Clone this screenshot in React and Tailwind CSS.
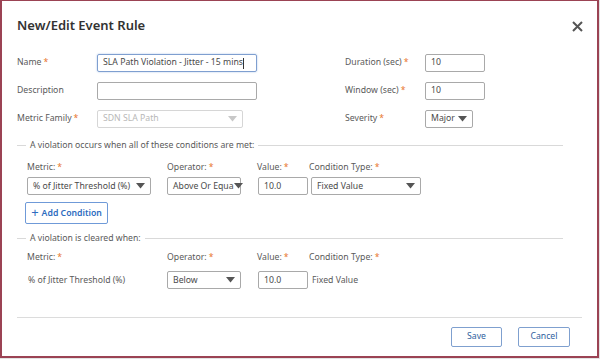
import React from "react";

const Star = () => <span className="text-[#e8772e] ml-[2px]">*</span>;

function Caret({ color = "#555" }) {
  return (
    <svg width="9" height="6" viewBox="0 0 9 6" className="shrink-0">
      <path d="M0 0 L9 0 L4.5 5.5 Z" fill={color} />
    </svg>
  );
}

function Select({ value, w, disabled, pr = "pr-[5px]" }) {
  return (
    <div
      className={`h-[18px] ${w} flex items-center justify-between pl-[5px] ${pr} border rounded-[2px] ${
        disabled ? "border-[#d6d6d6] text-[#b8b8b8]" : "border-[#a9a9a9] text-[#4a4a4a]"
      } whitespace-nowrap`}
    >
      <span>{value}</span>
      <Caret color={disabled ? "#c8c8c8" : "#555"} />
    </div>
  );
}

function Input({ value, w, focus }) {
  return (
    <div
      className={`h-[18px] ${w} flex items-center pl-[5px] border rounded-[2px] text-[#4a4a4a] ${
        focus ? "border-[#7f9fd0] border-[1.5px] shadow-[0_0_2px_#a9c2e6]" : "border-[#a9a9a9]"
      }`}
    >
      {value}
      {focus && <span className="w-px h-[11px] bg-[#333]" />}
    </div>
  );
}

function Legend({ text }) {
  return (
    <div className="flex items-center gap-[4px]">
      <div className="w-[9px] h-px bg-[#d9d9d9]" />
      <span className="text-[#5a5a5a] whitespace-nowrap">{text}</span>
      <div className="flex-1 h-px bg-[#d9d9d9]" />
    </div>
  );
}

function Heads({ mt }) {
  return (
    <div className={`pl-[25px] ${mt} grid grid-cols-[140px_90px_52px_120px] text-[#5a5a5a]`}>
      <span>Metric:<Star /></span>
      <span>Operator:<Star /></span>
      <span>Value:<Star /></span>
      <span>Condition Type:<Star /></span>
    </div>
  );
}

export default function App() {
  return (
    <div
      className="w-[600px] h-[359px] bg-[#e3e3e3] text-[8.7px]"
      style={{ fontFamily: '"Noto Sans", "Open Sans", sans-serif' }}
    >
      <div className="w-[599px] h-[358px] bg-white border-l-2 border-t border-r-2 border-b-2 border-[#9b4354] flex flex-col">
        {/* header */}
        <div className="flex items-center justify-between h-[48px] pl-[15px] pr-[14px] pt-[2px]">
          <h1 className="text-[13px] font-semibold text-[#333]">New/Edit Event Rule</h1>
          <svg width="11" height="11" viewBox="0 0 11 11">
            <path d="M1 1 L10 10 M10 1 L1 10" stroke="#555" strokeWidth="2" />
          </svg>
        </div>

        {/* top fields */}
        <div className="flex pl-[15px] text-[#5a5a5a]">
          <div className="w-[328px] flex flex-col">
            <div className="h-[28px] flex items-center">
              <span className="w-[80px]">Name<Star /></span>
              <Input value="SLA Path Violation - Jitter - 15 mins" w="w-[160px]" focus />
            </div>
            <div className="h-[28px] flex items-center">
              <span className="w-[80px]">Description</span>
              <Input value="" w="w-[160px]" />
            </div>
            <div className="h-[28px] flex items-center">
              <span className="w-[80px]">Metric Family<Star /></span>
              <Select value="SDN SLA Path" w="w-[146px]" disabled />
            </div>
          </div>
          <div className="flex flex-col">
            <div className="h-[28px] flex items-center">
              <span className="w-[80px]">Duration (sec)<Star /></span>
              <Input value="10" w="w-[60px]" />
            </div>
            <div className="h-[28px] flex items-center">
              <span className="w-[80px]">Window (sec)<Star /></span>
              <Input value="10" w="w-[60px]" />
            </div>
            <div className="h-[28px] flex items-center">
              <span className="w-[80px]">Severity<Star /></span>
              <Select value="Major" w="w-[48px]" />
            </div>
          </div>
        </div>

        {/* violation occurs */}
        <div className="pl-[15px] pr-[34px] mt-[6px]">
          <Legend text="A violation occurs when all of these conditions are met:" />
        </div>
        <Heads mt="mt-[9px]" />
        <div className="pl-[25px] mt-[3px] grid grid-cols-[140px_91px_53px_120px]">
          <Select value="% of Jitter Threshold (%)" w="w-[124px]" />
          <Select value="Above Or Equa" w="w-[74px]" pr="pr-[3px]" />
          <Input value="10.0" w="w-[50px]" />
          <Select value="Fixed Value" w="w-[110px]" />
        </div>
        <div className="pl-[23px] mt-[7px]">
          <button className="h-[22px] w-[83px] border border-[#6f9ad8] rounded-[2px] flex items-center justify-center gap-[3px] text-[#2d6cc0] font-semibold">
            <span className="text-[13px] font-normal leading-none mt-[-2px]">+</span>
            Add Condition
          </button>
        </div>

        {/* violation cleared */}
        <div className="pl-[15px] pr-[34px] mt-[8px]">
          <Legend text="A violation is cleared when:" />
        </div>
        <Heads mt="mt-[6px]" />
        <div className="pl-[25px] mt-[7px] grid grid-cols-[140px_91px_53px_120px] items-center text-[#5a5a5a]">
          <span className="pl-[1px]">% of Jitter Threshold (%)</span>
          <Select value="Below" w="w-[74px]" />
          <Input value="10.0" w="w-[50px]" />
          <span className="pl-[1px]">Fixed Value</span>
        </div>

        {/* footer */}
        <div className="mt-auto mx-[15px] border-t border-[#dcdcdc] h-[39px] flex items-center justify-end gap-[16px] pr-[12px]">
          <button className="h-[20px] w-[51px] border border-[#7fa0cf] rounded-[2px] text-[#2f5f9e]">Save</button>
          <button className="h-[20px] w-[52px] border border-[#7fa0cf] rounded-[2px] text-[#2f5f9e]">Cancel</button>
        </div>
      </div>
    </div>
  );
}
